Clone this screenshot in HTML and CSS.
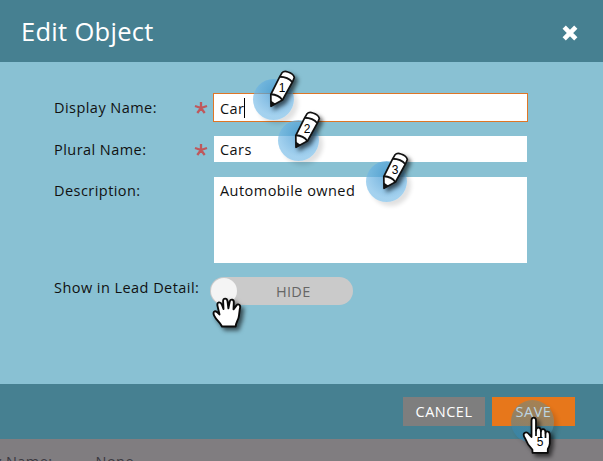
FILE: index.html
```html
<!DOCTYPE html>
<html lang="en">
<head>
<meta charset="utf-8">
<title>Edit Object</title>
<link rel="stylesheet" href="styles.css">
</head>
<body>
<svg class="defs" width="0" height="0" aria-hidden="true">
  <symbol id="required" viewBox="0 0 14 14">
    <path d="M7 7V1M7 7L1 5M7 7L13 5M7 7L3.3 12M7 7L10.7 12" fill="none" stroke="#bf585c" stroke-width="2.3"/>
  </symbol>
  <symbol id="pencil" viewBox="0 0 60 60">
    <path d="M21 40.3L20.8 28.5L29.5 11.2L32 6.8Q34 4.6 38 6Q43.5 7.7 44.3 11.5L42.7 15.5L32.5 34Z" fill="#fff" stroke="#111" stroke-width="1.7" stroke-linejoin="round"/>
    <path d="M29.7 10.7Q38 10.8 42.2 16M21 28.3Q28.5 28.5 32.3 34" fill="none" stroke="#111" stroke-width="1.9"/>
    <path d="M20.8 34.4L25.5 37.8L21 40.8Z" fill="#111"/>
  </symbol>
</svg>
<div class="dialog">
  <header class="header">
    <h1>Edit Object</h1>
    <svg class="close" viewBox="0 0 16 16"><path d="M2.2 2.2L13.8 13.8M13.8 2.2L2.2 13.8" stroke="#fff" stroke-width="4.6"/></svg>
  </header>
  <main class="form">
    <div class="row name">
      <span class="label">Display Name:</span>
      <svg class="required"><use href="#required"/></svg>
      <div class="input focused">Car<i class="caret"></i></div>
    </div>
    <div class="row plural">
      <span class="label">Plural Name:</span>
      <svg class="required"><use href="#required"/></svg>
      <div class="input">Cars</div>
    </div>
    <div class="row description">
      <span class="label">Description:</span>
      <div class="input area">Automobile owned</div>
    </div>
    <div class="row detail">
      <span class="label wide">Show in Lead Detail:</span>
      <div class="toggle"><i class="knob"></i><span>HIDE</span></div>
    </div>
  </main>
  <footer class="footer">
    <div class="button cancel">CANCEL</div>
    <div class="button save"><span>SAVE</span></div>
  </footer>
</div>
<div class="behind"><span>y Name:</span><span>None</span></div>

<div class="callout one"><i class="spot"></i><svg viewBox="0 0 60 60"><use href="#pencil"/></svg><b>1</b></div>
<div class="callout two"><i class="spot"></i><svg viewBox="0 0 60 60"><use href="#pencil"/></svg><b>2</b></div>
<div class="callout three"><i class="spot"></i><svg viewBox="0 0 60 60"><use href="#pencil"/></svg><b>3</b></div>
<svg class="hand open" viewBox="0 0 34 34">
  <path d="M11 29.5C8.8 25 5.5 23.5 3.4 19.2Q1.5 15.2 3.6 14.4Q5.4 13.7 8.5 17.5L6.6 9.4Q5.7 5.9 7.8 5.4Q9.8 5 11 8L12.5 12L12.1 4.3Q12 1.6 14.2 1.6Q16.1 1.6 16.5 4.2L17.4 11.4L18.7 4.6Q19.3 2.2 21.3 2.7Q23 3.2 22.8 5.7L22.5 12.4L25.3 8.6Q26.9 6.6 28.5 7.9Q29.8 9 28.8 12.2L28 18.5C27.7 23 25 24.5 24.7 29.5Z" fill="#fff" stroke="#0a0a0a" stroke-width="1.9" stroke-linejoin="round"/>
</svg>
<div class="click"><i class="spot"></i>
  <svg viewBox="0 0 60 66">
    <path d="M24.5 53.8L24.4 50.7Q19.6 46 17.2 39.5Q14.5 35.6 16.5 34Q18.7 32.4 21 35.2L23.5 38V21.5Q23.5 18.7 25.7 18.7Q28 18.7 28 21.5V31.5Q28.2 28.5 30.6 28.6Q32.8 28.7 32.9 32.2Q33.4 29.7 35.5 30.2Q37.5 30.6 37.5 34Q38.2 31.8 40.2 32.7Q42 33.4 41.8 37V44.5Q41.5 47.5 39.8 50V53.8Z" fill="#fff" stroke="#0a0a0a" stroke-width="1.8" stroke-linejoin="round"/>
    <path d="M28 31V37M32.9 32V38M37.5 34V39" stroke="#0a0a0a" stroke-width="1.7"/>
  </svg><b>5</b></div>
</body>
</html>
```
FILE: styles.css
```css
* { box-sizing: border-box; }
body {
  margin: 0;
  width: 603px;
  height: 461px;
  overflow: hidden;
  position: relative;
  background: #807d80;
  color: #111;
  font: 14.5px/20px "Open Sans", sans-serif;
  letter-spacing: 0.45px;
}
.defs { position: absolute; }
.header {
  height: 62px;
  padding: 0 25px 0 21px;
  display: flex;
  align-items: center;
  justify-content: space-between;
  background: #468091;
}
h1 {
  margin: 0;
  color: #fff;
  font-size: 25.5px;
  font-weight: 400;
  line-height: 34px;
  letter-spacing: 0.3px;
}
.close { width: 16px; height: 16px; margin-top: 4px; }
.form {
  height: 322px;
  padding: 31px 75px 0 54px;
  background: #89c1d3;
}
.row { display: flex; align-items: flex-start; }
.label { width: 140px; padding-top: 5px; white-space: nowrap; }
.required { width: 14px; height: 14px; margin-top: 8px; }
.input {
  width: 313px;
  height: 26px;
  margin-left: 6px;
  padding: 4px 6px;
  display: flex;
  background: #fff;
}
.name { height: 43px; }
.focused {
  width: 315px;
  height: 29px;
  margin-left: 5px;
  padding: 5px 6px;
  border: 1px solid #df7626;
}
.caret { width: 1px; height: 20px; margin-top: -1px; background: #000; }
.plural { height: 41px; }
.plural .label { padding-top: 4px; }
.plural .required { margin-top: 7px; }
.description { height: 100px; }
.area { height: 86px; margin-left: 20px; }
.description .label { padding-top: 4px; }
.wide { width: 156px; padding-top: 1px; }
.toggle {
  width: 143px;
  height: 28px;
  border-radius: 14px;
  background: #cacaca;
  color: #666;
  display: flex;
  align-items: center;
}
.knob {
  width: 26px;
  height: 26px;
  border-radius: 50%;
  background: #f4f4f4;
  margin-left: 1px;
}
.toggle span { margin: 2px 0 0 39px; letter-spacing: 0.3px; }
.footer {
  height: 55px;
  padding: 13px 28px 0 0;
  display: flex;
  justify-content: flex-end;
  gap: 7px;
  background: #468091;
}
.button {
  width: 82px;
  height: 29px;
  line-height: 30px;
  text-align: center;
  color: #fff;
  letter-spacing: 0.5px;
}
.cancel { background: #7e7e7e; }
.save { width: 83px; background: #e7771b; color: #bcd5e2; }
.save span { position: relative; z-index: 1; }
.behind {
  height: 22px;
  padding-top: 13px;
  display: flex;
  gap: 43px;
  overflow: hidden;
  color: #3b3940;
  margin-left: -6px;
  white-space: nowrap;
}
.callout { position: absolute; width: 60px; height: 60px; }
.one { left: 250px; top: 66px; }
.two { left: 275px; top: 107px; }
.three { left: 363px; top: 148px; }
.callout svg, .click svg {
  position: absolute;
  inset: 0;
  width: 100%;
  height: 100%;
  filter: drop-shadow(3px 3px 2px rgba(0, 0, 0, .6));
}
.click svg, .click b { z-index: 2; }
.spot {
  position: absolute;
  left: 2.5px;
  top: 13px;
  width: 41px;
  height: 41px;
  border-radius: 50%;
  background: radial-gradient(circle at 55% 35%, rgba(65, 150, 208, .75), rgba(115, 185, 230, .65) 65%);
  box-shadow: 4px 4px 4px rgba(0, 0, 0, .12);
}
.callout b, .click b {
  position: absolute;
  left: 26px;
  top: 15px;
  width: 12px;
  text-align: center;
  color: #000;
  font: 12px/14px "Liberation Sans", sans-serif;
  letter-spacing: 0;
}
.hand {
  position: absolute;
  left: 211px;
  top: 297px;
  width: 34px;
  height: 34px;
  overflow: visible;
  filter: drop-shadow(3px 3px 2px rgba(0, 0, 0, .6));
}
.click { position: absolute; left: 508px; top: 399px; width: 60px; height: 66px; }
.click .spot {
  left: 3px;
  top: 1px;
  width: 43px;
  height: 43px;
  background: linear-gradient(200deg, rgba(110, 140, 130, .5), rgba(40, 135, 190, .55));
}
.click b { top: 36px; }
```
